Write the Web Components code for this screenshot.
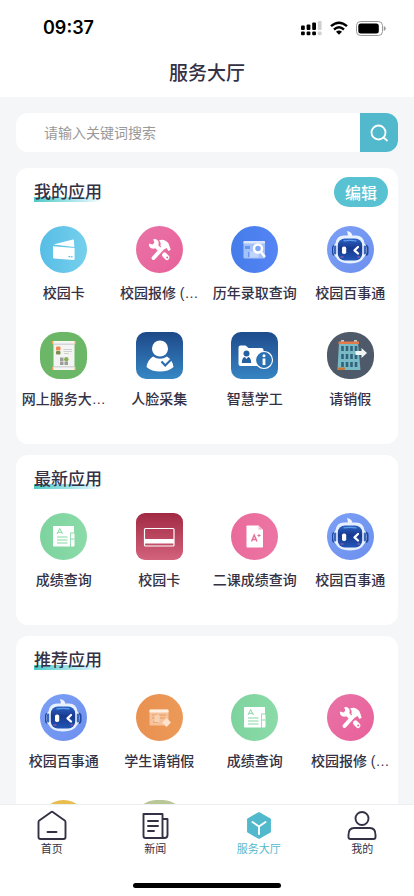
<!DOCTYPE html>
<html lang="zh-CN">
<head>
<meta charset="utf-8">
<meta name="viewport" content="width=device-width, initial-scale=1">
<title>服务大厅</title>
<style>
  html, body {
    margin: 0;
    height: 100%;
  }

  body {
    --main-color: #52b9cd;
    --dark: #343145;
    --page: #f4f6f8;
    font-family: "Liberation Sans", "Noto Sans CJK SC", sans-serif;
    color: var(--dark);
    background: #fff;
  }
</style>
</head>
<body>
<hall-page>
  <status-bar slot="top">09:37</status-bar>
  <page-title slot="top">服务大厅</page-title>

  <search-box placeholder="请输入关键词搜索"></search-box>

  <app-card heading="我的应用" action="编辑">
    <app-item icon="wallet">校园卡</app-item>
    <app-item icon="repair">校园报修 (…</app-item>
    <app-item icon="history">历年录取查询</app-item>
    <app-item icon="robot">校园百事通</app-item>
    <app-item icon="scroll">网上服务大…</app-item>
    <app-item icon="face">人脸采集</app-item>
    <app-item icon="folder">智慧学工</app-item>
    <app-item icon="building">请销假</app-item>
  </app-card>

  <app-card heading="最新应用">
    <app-item icon="score">成绩查询</app-item>
    <app-item icon="card">校园卡</app-item>
    <app-item icon="grade">二课成绩查询</app-item>
    <app-item icon="robot">校园百事通</app-item>
  </app-card>

  <app-card heading="推荐应用">
    <app-item icon="robot">校园百事通</app-item>
    <app-item icon="leave">学生请销假</app-item>
    <app-item icon="score">成绩查询</app-item>
    <app-item icon="repair">校园报修 (…</app-item>
    <app-item icon="yellow"></app-item>
    <app-item icon="olive"></app-item>
  </app-card>

  <tab-bar slot="bottom">
    <tab-item icon="home">首页</tab-item>
    <tab-item icon="news">新闻</tab-item>
    <tab-item icon="hall" active>服务大厅</tab-item>
    <tab-item icon="mine">我的</tab-item>
  </tab-bar>
</hall-page>

<script>
function makeTemplate(html) {
  const template = document.createElement('template');
  template.innerHTML = html;
  return template;
}

class BaseElement extends HTMLElement {
  constructor() {
    super();
    this.attachShadow({ mode: "open" });
    this.shadowRoot.appendChild(this.constructor.template.content.cloneNode(true));
  }

  find(selector) {
    return this.shadowRoot.querySelector(selector);
  }
}

/* Tile background, corner radius and glyph of every app, on a 47x47 grid */
const appIcons = {
  wallet: {
    bg: 'linear-gradient(90deg, #57bde6, #76d0ec)',
    svg: `<path fill="#fff" d="M13.500 18.500 33 13.500q.8-.1.900.6l.4 6.800z"/>
      <path fill="#fff" d="M13 20.200 34.600 22v11q0 1-1 .9l-19.400-1.300q-1.200-.1-1.200-1.200z"/>
      <path stroke="#57bde6" stroke-width="1.200" d="M28.500 30.600h1.800M31 30.800h1.600"/>`
  },
  repair: {
    bg: 'linear-gradient(135deg, #e873a6, #e9609a)',
    svg: `<path fill="#fff" d="m13 17.500 3.500 1 1.800-1.800-1-3.500c4-1 6.500 2.500 5 6l4 4-3 3-4-4c-3.500 1.500-7-1-6.300-4.700z"/>
      <path stroke="#fff" stroke-width="4" stroke-linecap="round" d="m17.500 32 10-11"/>
      <path stroke="#fff" stroke-width="5" stroke-linecap="round" d="m28.500 29 2.500 2.500"/>
      <path fill="#fff" d="M23 14.500q3.500-1.500 6.500.2 3.300 1.800 3.800 4.800l1.400 4.300-2.200 1.200-2-3-2.500 1.500-3.700-3.800q1.200-3-1.300-5.200z"/>
      <circle cx="31.200" cy="31.500" r="1" fill="#e9609a"/>`
  },
  history: {
    bg: 'linear-gradient(90deg, #447de9, #5684f5)',
    svg: `<rect x="12.500" y="15" width="21.500" height="17.500" rx="1" fill="#a5c1f9"/>
      <path fill="#dce7ff" d="M13.500 15h19.500q1 0 1 1v1.500H12.500V16q0-1 1-1z"/>
      <path fill="#6a96f3" d="M14 20h5v3h-5zM17 26h5v5h-5z"/>
      <path fill="#c1d4fc" d="M18.500 25.500h9v6h-9z"/>
      <circle cx="27" cy="22.500" r="4" fill="#7fa6f5" stroke="#fff" stroke-width="2.500"/>
      <path stroke="#fff" stroke-width="2.500" d="m30 26 4 5"/>`
  },
  robot: {
    bg: 'linear-gradient(135deg, #7c9ff5, #6c90ee)',
    svg: `<defs><linearGradient id="face" x2="0" y2="1">
        <stop stop-color="#2c62c4"/><stop offset=".45" stop-color="#17398f"/><stop offset="1" stop-color="#2256b5"/>
      </linearGradient></defs>
      <rect x="5" y="18.500" width="36.500" height="11.500" rx="3.500" fill="#1d479f"/>
      <path fill="#eef5ff" d="M19.500 11q2.500-1.500.3-6 6 .8 5.500 6z"/>
      <path fill="#e6f0ff" d="M17 9.500h12q7.500 0 8.500 8 2 .8 2 6.500t-2 6.500Q34 37.500 23 37.500T8.500 30.500q-2-.8-2-6.500t2-6.500q1-8 8.500-8z"/>
      <rect x="7" y="19.500" width="2.200" height="9" rx="1" fill="#3a67bd"/>
      <rect x="36.800" y="19.500" width="2.200" height="9" rx="1" fill="#3a67bd"/>
      <rect x="10.800" y="12.500" width="24.400" height="22" rx="7" fill="url(#face)"/>
      <path stroke="#5f9eea" stroke-width="1.200" stroke-linecap="round" d="M17 14.800q6-1 12 0"/>
      <rect x="15" y="20.500" width="4.200" height="7.500" rx="1.800" fill="#fff"/>
      <path stroke="#fff" stroke-width="2.300" stroke-linecap="round" stroke-linejoin="round" d="m31 21-3.500 3.300 3.500 3.200"/>
      <path stroke="#8a56b0" stroke-width="1.300" stroke-linecap="round" d="M14 31h2M31 31h1.500"/>`
  },
  scroll: {
    bg: '#6bb667', radius: '20px',
    svg: `<path fill="#f0a65d" d="M12 9h24v3H12zM12 35h24v3H12z"/>
      <path fill="#f4f4f2" d="M13.500 9h21v29h-21z"/>
      <path fill="#d3d7d8" d="M13.500 11.500h21V13h-21zM13.500 34h21v1.500h-21z"/>
      <rect x="16" y="14.500" width="4.500" height="4" rx="1" fill="#ec8950"/>
      <rect x="16" y="19" width="4.500" height="3.500" rx="1" fill="#7b8c50"/>
      <path stroke="#d0d0d0" d="M23.500 17.500H32M23.500 19.500H32M24 21.500h5"/>
      <path fill="#9c9c9c" d="M20 25.500h3.500V29H20zM20 29.500h3.500V33H20zM24.500 29.500H28V33h-3.500z"/>
      <circle cx="26.300" cy="27.200" r="2.200" fill="#8cae55"/>`
  },
  face: {
    bg: 'linear-gradient(#1e4888, #3687c5)', radius: '10px',
    svg: `<circle cx="24" cy="16.500" r="8" fill="#fff"/>
      <path fill="#fff" d="M17 24.500q7 4.500 14 0 5.500 3.500 6.500 10.500-5 4.500-13.500 4.500T10.500 35q1-7 6.500-10.500z"/>
      <path fill="none" stroke="#2b6eb0" stroke-width="2.200" d="m25.500 29.500 3.700 4 6-6"/>`
  },
  folder: {
    bg: 'linear-gradient(#1e4b8c, #3684c3)', radius: '10px',
    svg: `<path fill="#fff" d="M9.500 13.500h5l3 2.500h13q2 0 2 2v16h-23q-2 0-2-2V15.500q0-2 2-2z"/>
      <circle cx="15.500" cy="21.500" r="3" fill="#26609f"/>
      <path fill="#26609f" d="M10.800 31q.2-5.500 3-6l1.700 2 1.700-2q2.800.5 3 6z"/>
      <circle cx="33" cy="28" r="8.500" fill="#2c71b2" stroke="#fff" stroke-width="1.200"/>
      <circle cx="33" cy="23.800" r="1.500" fill="#fff"/>
      <path stroke="#fff" stroke-width="2.800" d="M33 26.500V33"/>`
  },
  building: {
    bg: '#4e5a69', radius: '22px',
    svg: `<path fill="#bfc9cf" d="M14 8h3v3h-3zM27 8h3v3h-3z"/>
      <path fill="#78bac6" d="M12 11h19l2.500 27H10.500z"/>
      <path fill="#e47b4a" d="M11.500 9.500h20.500V12H11.500z"/>
      <path stroke="#32637c" stroke-width="2.600" stroke-dasharray="5 3" d="M15.500 14v21M20 14v21M24.500 14v21M29 14v21"/>
      <path fill="#c27a3e" d="M10.500 35.500h7.500V38H10.500z"/>
      <path fill="#f2f5f6" d="M28.500 19h6v-3l5.500 5-5.500 5v-3h-6z"/>`
  },
  score: {
    bg: 'linear-gradient(90deg, #7dd39e, #8bdba8)',
    svg: `<path fill="#fff" d="M14 13h20v6.500h-3.800v14H14q-1 0-1-1V14q0-1 1-1z"/>
      <path fill="#fff" d="M31 20.500h3.500v12q0 1-1 1H31z"/>
      <path stroke="#84d7a3" stroke-width="1" d="M17 24h10.500M17 27h10.500M17 30h10.500M31 26h3.500"/>
      <path fill="none" stroke="#84d7a3" stroke-width="1" d="m17 21 2.700-5.500 2.800 5.500M18 19.300h3.500"/>`
  },
  card: {
    bg: 'linear-gradient(#a12a43, #d3627c)', radius: '9px',
    svg: `<rect x="8.500" y="15.500" width="29.500" height="17.500" rx="1" fill="none" stroke="#fff" stroke-width="1.200"/>
      <path fill="#fff" d="M8.500 26h29.500v4.500H8.500z"/>`
  },
  grade: {
    bg: 'linear-gradient(90deg, #ea6b9b, #ec75a4)',
    svg: `<path fill="#fff" d="M16 12.500h11.500l4.500 4.200v17q0 .8-.8.8H16.300q-.8 0-.8-.8V13.300z"/>
      <path fill="#f7bed3" d="M27.500 12.500v4.200H32z"/>
      <path fill="none" stroke="#e76e9b" stroke-width="1.400" d="m20.500 28.500 2.700-6.500 2.800 6.500M21.500 26.500h3.600"/>
      <path stroke="#e76e9b" d="M26.500 22.500h3M28 21v3"/>`
  },
  leave: {
    bg: 'linear-gradient(90deg, #e99150, #ec9958)',
    svg: `<rect x="13.500" y="15.500" width="19" height="16" rx="1" fill="#f5c29c"/>
      <path fill="#fff0e4" d="M14.500 15.500h17q1 0 1 1v2h-19v-2q0-1 1-1z"/>
      <path stroke="#ec9958" stroke-width="1" d="M16 21h5M16 24h3M23 21h7M24 24h5M17 28h5"/>
      <path fill="#f8d1b3" d="M18.500 21h5v7h-5z"/>
      <path fill="#ffe0ca" d="m30.500 24 4.500 4.500-4.500 4.500-4.500-4.500z"/>`
  },
  yellow: { bg: '#e8bd4c', svg: '' },
  olive: { bg: '#b8c795', radius: '20px', svg: '' }
};

const tabIcons = {
  home: `<path d="M1.500 12.200q0-1 .8-1.600l12-8.600q.7-.5 1.400 0l12 8.600q.8.600.8 1.600V27q0 2-2 2h-23q-2 0-2-2z"/><path d="M10.500 22h9"/>`,
  news: `<path d="M22.500 26V4H3.500v22q0 2 2 2h19q3 0 3-3V9h-5v17q0 2 2 2"/><path d="M8 11h10M8 16h10M8 21h6"/>`,
  hall: `<path fill="currentColor" stroke-linejoin="round" d="m15 3 11 6.300v12.400L15 28 4 21.700V9.300z"/><path stroke="#fff" d="m8.500 12 6.500 4.500 6.500-4.500M15 16.500V24"/>`,
  mine: `<circle cx="15" cy="8.500" r="6.500"/><path d="M7 18h16q5.500 0 5.500 7v2q0 2-2 2h-23q-2 0-2-2v-2q0-7 5.500-7z"/>`
};

class HallPage extends BaseElement {
  static template = makeTemplate(`
<style>
  :host {
    display: flex;
    flex-direction: column;
    height: 100%;
  }

  main {
    flex: 1;
    min-height: 0;
    box-sizing: border-box;
    display: flex;
    flex-direction: column;
    gap: 11px;
    padding: 16px 16px 0;
    overflow-y: auto;
    scrollbar-width: none;
    background: var(--page);
  }
</style>
<header><slot name="top"></slot></header>
<main><slot></slot></main>
<slot name="bottom"></slot>
`);
}

class StatusBar extends BaseElement {
  static template = makeTemplate(`
<style>
  :host {
    display: flex;
    align-items: center;
    justify-content: space-between;
    height: 56px;
    padding: 0 28px 0 43px;
    font: 600 18px/24px Inter, "Liberation Sans", sans-serif;
    color: #000;
  }

  .icons {
    display: flex;
    align-items: center;
    gap: 8px;
  }

  svg { display: block; }
</style>
<slot></slot>
<div class="icons">
  <svg width="21" height="16" viewBox="0 0 21 16">
    <g fill="#000">
      <rect x="0" y="5.500" width="3.800" height="4.500" rx="1"/><rect x="5.600" y="4.500" width="3.800" height="5.500" rx="1"/><rect x="11.200" y="2.500" width="3.800" height="7.500" rx="1"/>
      <rect x="0" y="11.500" width="3.800" height="3.800" rx="1"/><rect x="5.600" y="11.500" width="3.800" height="3.800" rx="1"/><rect x="11.200" y="11.500" width="3.800" height="3.800" rx="1"/>
    </g>
    <g fill="#d0d0d0"><rect x="16.800" y="1" width="3.800" height="9" rx="1"/><rect x="16.800" y="11.500" width="3.800" height="3.800" rx="1"/></g>
  </svg>
  <svg width="18" height="14" viewBox="0 0 18 14">
    <path fill="none" stroke="#000" stroke-width="2.400" d="M1 5.200q8-7 16 0M4 8.500q5-4.400 10 0"/>
    <path d="M6 10.700q3-2.500 6 0l-3 3z"/>
  </svg>
  <svg width="30" height="15" viewBox="0 0 30 15">
    <rect x=".5" y=".5" width="26" height="14" rx="4" fill="#fff" stroke="#999"/>
    <rect x="2.300" y="2.500" width="20.500" height="10" rx="2.500"/>
    <path fill="#999" d="M27.800 5q2 .6 2 2.500t-2 2.500z"/>
  </svg>
</div>
`);
}

class PageTitle extends BaseElement {
  static template = makeTemplate(`
<style>
  :host { display: block; padding: 4px 0 9px; }

  h1 {
    margin: 0;
    font-size: 19px;
    font-weight: 500;
    line-height: 28px;
    text-align: center;
  }
</style>
<h1><slot></slot></h1>
`);
}

class SearchBox extends BaseElement {
  static template = makeTemplate(`
<style>
  :host { display: block; margin-bottom: 5px; }

  form {
    display: flex;
    height: 39px;
    border-radius: 12px;
    overflow: hidden;
    background: #fff;
  }

  input {
    flex: 1;
    min-width: 0;
    padding: 0 28px;
    border: 0;
    outline: 0;
    font: inherit;
    font-size: 14px;
    background: none;
  }

  input::placeholder { color: #999; }

  button {
    display: flex;
    align-items: center;
    justify-content: center;
    width: 38px;
    padding: 0;
    border: 0;
    background: var(--main-color);
  }
</style>
<form role="search">
  <input type="search">
  <button type="button" aria-label="搜索">
    <svg width="18" height="18" viewBox="0 0 18 18" fill="none" stroke="#fff" stroke-width="1.800" stroke-linecap="round">
      <circle cx="8.500" cy="8.500" r="7"/><path d="m13.500 13.500 3.500 3"/>
    </svg>
  </button>
</form>
`);

  connectedCallback() {
    const input = this.find('input');
    input.placeholder = this.getAttribute('placeholder');
    input.setAttribute('aria-label', input.placeholder);
  }
}

class AppCard extends BaseElement {
  static template = makeTemplate(`
<style>
  :host {
    display: block;
    flex: none;
    padding: 9px 0 35px;
    border-radius: 12px;
    background: #fff;
  }

  .head {
    display: flex;
    align-items: center;
    justify-content: space-between;
    height: 30px;
    margin-bottom: 19px;
    padding: 0 10px 0 18px;
  }

  /* the teal stroke runs behind the lower edge of the heading */
  h2 {
    margin: 0;
    padding-top: 2px;
    font-size: 17px;
    font-weight: 500;
    line-height: 20px;
    background: linear-gradient(90deg, #4fcac9, #c4eef4 75%, #fff) left 0 bottom 1px / 100% 5px no-repeat;
  }

  button {
    width: 54px;
    height: 30px;
    padding: 0;
    border: 0;
    border-radius: 15px;
    font: inherit;
    font-size: 16px;
    font-weight: 500;
    color: #fff;
    background: #59c2d2;
  }

  .grid {
    display: grid;
    grid-template-columns: repeat(4, 1fr);
    row-gap: 29px;
  }
</style>
<div class="head"><h2></h2></div>
<div class="grid"><slot></slot></div>
`);

  connectedCallback() {
    this.find('h2').textContent = this.getAttribute('heading');
    const action = this.getAttribute('action');
    if (action && !this.find('button')) {
      const button = document.createElement('button');
      button.type = 'button';
      button.textContent = action;
      this.find('.head').appendChild(button);
    }
  }
}

class AppItem extends BaseElement {
  static template = makeTemplate(`
<style>
  :host { display: block; min-width: 0; }

  a {
    display: flex;
    flex-direction: column;
    align-items: center;
    gap: 10px;
    color: inherit;
    text-decoration: none;
  }

  .tile {
    width: 47px;
    height: 47px;
    border-radius: 50%;
    overflow: hidden;
  }

  svg { display: block; }

  .label {
    height: 20px;
    font-size: 14px;
    font-weight: 500;
    line-height: 20px;
    white-space: nowrap;
  }
</style>
<a href="#">
  <span class="tile"></span>
  <span class="label"><slot></slot></span>
</a>
`);

  connectedCallback() {
    const icon = appIcons[this.getAttribute('icon')];
    const tile = this.find('.tile');
    tile.style.background = icon.bg;
    if (icon.radius) tile.style.borderRadius = icon.radius;
    tile.innerHTML = `<svg width="47" height="47" viewBox="0 0 47 47" fill="none" aria-hidden="true">${icon.svg}</svg>`;
  }
}

class TabBar extends BaseElement {
  static template = makeTemplate(`
<style>
  :host {
    display: block;
    flex: none;
    border-top: 1px solid #eceef1;
    background: #fff;
  }

  nav {
    display: grid;
    grid-template-columns: repeat(4, 1fr);
    padding: 5px 0 26px;
  }

  .indicator {
    width: 148px;
    height: 5px;
    margin: 0 auto 8px;
    border-radius: 3px;
    background: #000;
  }
</style>
<nav><slot></slot></nav>
<div class="indicator"></div>
`);
}

class TabItem extends BaseElement {
  static template = makeTemplate(`
<style>
  :host { display: block; }
  :host([active]) { color: var(--main-color); }

  a {
    display: flex;
    flex-direction: column;
    align-items: center;
    gap: 1px;
    font-size: 11px;
    line-height: 16px;
    color: inherit;
    text-decoration: none;
  }

  svg { display: block; }
</style>
<a href="#"><svg width="30" height="30" viewBox="0 0 30 30" fill="none" stroke="currentColor" stroke-width="1.900" stroke-linecap="round" stroke-linejoin="round" aria-hidden="true"></svg><span><slot></slot></span></a>
`);

  connectedCallback() {
    this.find('svg').innerHTML = tabIcons[this.getAttribute('icon')];
  }
}

window.customElements.define('hall-page', HallPage);
window.customElements.define('status-bar', StatusBar);
window.customElements.define('page-title', PageTitle);
window.customElements.define('search-box', SearchBox);
window.customElements.define('app-card', AppCard);
window.customElements.define('app-item', AppItem);
window.customElements.define('tab-bar', TabBar);
window.customElements.define('tab-item', TabItem);
</script>
</body>
</html>
